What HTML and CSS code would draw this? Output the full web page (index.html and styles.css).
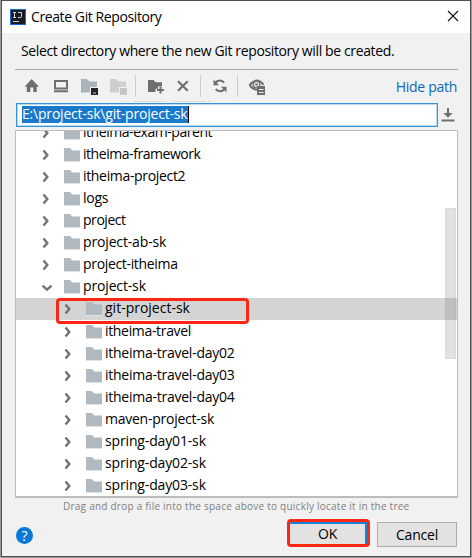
FILE: index.html
```html
<!DOCTYPE html>
<html lang="en">
<head>
<meta charset="utf-8">
<title>Create Git Repository</title>
<link rel="stylesheet" href="styles.css">
</head>
<body>
<svg width="0" height="0" class="defs">
  <symbol id="folder" viewBox="0 0 16 14"><path d="M0 0h6l2.200 2.500H16V13H0z" fill="#afb9bf"/><path d="M0 13h16v1H0z" fill="#dfe3e5"/></symbol>
  <symbol id="right" viewBox="0 0 8 12"><path d="M1.500 1.500 5.300 6 1.500 10.500" fill="none" stroke="#727272" stroke-width="2.400"/></symbol>
  <symbol id="down" viewBox="0 0 12 8"><path d="M1.500 1.600 6 5.600 10.500 1.600" fill="none" stroke="#727272" stroke-width="2.400"/></symbol>
</svg>
<div class="window">
  <header class="titlebar">
    <svg class="logo" width="16" height="16"><rect width="16" height="16" fill="#1769d2"/><rect x="1" y="1" width="14" height="14" fill="#181c23"/><path d="M3 3.500h3M4.500 3.500v5M3 8.500h3M8 3.500h3.500v4q0 1-1 1H8M3 12.500h6" stroke="#d5d5d5" fill="none"/></svg>
    <h1 class="title">Create Git Repository</h1>
    <svg class="close" width="12" height="12"><path d="M1 1 11 11M11 1 1 11" stroke="#111" stroke-width="1.100"/></svg>
  </header>
  <main class="content">
    <p class="subtitle">Select directory where the new Git repository will be created.</p>
    <div class="toolbar">
      <svg class="tools" width="260" height="32" viewBox="15 70 260 32">
        <path d="M24.500 86.800 31.700 79l7.300 7.800h-2.300V92h-3.400v-4.500h-3V92h-3.500v-5.200z" fill="#6e6e6e"/>
        <path d="M55 81h12v7.500H55zM54 91.200h14" fill="none" stroke="#6e6e6e" stroke-width="2"/>
        <path d="M81 79h6l2.300 2.500H97V87h-7v5.500h-9z" fill="#aab5bb"/><path d="M91 88h7v7h-7z" fill="#262222"/><path d="M93 92h3v2h-3z" fill="#777"/>
        <path d="M110 79h6l2.300 2.500h7.700V87h-7v5.500h-9z" fill="#cecece"/><path d="M120 88h7v7h-7z" fill="#c5c5c5"/>
        <path d="M135.500 75v22M200.500 75v22M237.500 75v22" stroke="#cecece"/>
        <path d="M148 80h5.500l2.200 2.200h6.300v4h-4v2.500h-2.500V92H148z" fill="#6e6e6e"/><path d="M160.500 86.500v7M157 90h7" stroke="#6e6e6e" stroke-width="2"/>
        <path d="m178 81.300 9.700 9.400m0-9.400-9.700 9.400" stroke="#6e6e6e" stroke-width="2.100"/>
        <path d="M214.500 84.500a5.500 5.500 0 0 1 9.600-1.800M225.300 87.300a5.500 5.500 0 0 1-9.600 1.900" fill="none" stroke="#6e6e6e" stroke-width="2"/><path d="M213.500 79.500v5.800h5.500zM226.500 92.500v-5.800H221z" fill="#6e6e6e"/>
        <path d="M249.500 85q7.500-8.700 14-.2M249.500 85q3 4.300 7.500 4.800" fill="none" stroke="#6e6e6e" stroke-width="2"/><circle cx="256.500" cy="84.500" r="3.300" fill="none" stroke="#777" stroke-width="1.500"/><circle cx="256.500" cy="84.500" r="1.300" fill="#6e6e6e"/><path d="M257 86h8v9h-8z" fill="#6e6e6e"/><path d="M259 89.500h4.500m-4.500 3h4.500" stroke="#f1f1f1"/>
        <path d="M125 101.500h1M134 101.500h31M173 101.500h38" stroke="#d5d5d5" stroke-dasharray="2 1.500"/>
      </svg>
      <a class="hide">Hide path</a>
    </div>
    <div class="pathrow">
      <div class="field"><span class="selection"><span class="pathtext">E:\project-sk\git-project-sk</span></span></div>
      <svg class="history" width="14" height="14"><path d="M.5 12.500h13" stroke="#6e6e6e" stroke-width="2"/><path d="M7 0v6" stroke="#6e6e6e" stroke-width="2"/><path d="M2.500 5h9L7 9.800z" fill="#6e6e6e"/></svg>
    </div>
    <div class="tree">
      <div class="rows">
        <div class="row"><svg class="arrow"><use href="#right"/></svg><svg class="folder"><use href="#folder"/></svg><span class="tightest">itheima-exam-parent</span></div>
        <div class="row"><svg class="arrow"><use href="#right"/></svg><svg class="folder"><use href="#folder"/></svg><span class="tightest">itheima-framework</span></div>
        <div class="row"><svg class="arrow"><use href="#right"/></svg><svg class="folder"><use href="#folder"/></svg><span class="tighter">itheima-project2</span></div>
        <div class="row"><svg class="arrow"><use href="#right"/></svg><svg class="folder"><use href="#folder"/></svg><span class="tight">logs</span></div>
        <div class="row"><svg class="arrow"><use href="#right"/></svg><svg class="folder"><use href="#folder"/></svg><span class="tightest">project</span></div>
        <div class="row"><svg class="arrow"><use href="#right"/></svg><svg class="folder"><use href="#folder"/></svg><span class="snug">project-ab-sk</span></div>
        <div class="row"><svg class="arrow"><use href="#right"/></svg><svg class="folder"><use href="#folder"/></svg><span class="tighter">project-itheima</span></div>
        <div class="row"><svg class="arrow open"><use href="#down"/></svg><svg class="folder"><use href="#folder"/></svg><span class="snug">project-sk</span></div>
        <div class="row child selected"><svg class="arrow"><use href="#right"/></svg><svg class="folder"><use href="#folder"/></svg><span>git-project-sk</span></div>
        <div class="row child"><svg class="arrow"><use href="#right"/></svg><svg class="folder"><use href="#folder"/></svg><span class="tighter">itheima-travel</span></div>
        <div class="row child"><svg class="arrow"><use href="#right"/></svg><svg class="folder"><use href="#folder"/></svg><span class="tight">itheima-travel-day02</span></div>
        <div class="row child"><svg class="arrow"><use href="#right"/></svg><svg class="folder"><use href="#folder"/></svg><span class="tight">itheima-travel-day03</span></div>
        <div class="row child"><svg class="arrow"><use href="#right"/></svg><svg class="folder"><use href="#folder"/></svg><span class="tight">itheima-travel-day04</span></div>
        <div class="row child"><svg class="arrow"><use href="#right"/></svg><svg class="folder"><use href="#folder"/></svg><span class="tight">maven-project-sk</span></div>
        <div class="row child"><svg class="arrow"><use href="#right"/></svg><svg class="folder"><use href="#folder"/></svg><span class="snug">spring-day01-sk</span></div>
        <div class="row child"><svg class="arrow"><use href="#right"/></svg><svg class="folder"><use href="#folder"/></svg><span class="snug">spring-day02-sk</span></div>
        <div class="row child"><svg class="arrow"><use href="#right"/></svg><svg class="folder"><use href="#folder"/></svg><span class="snug">spring-day03-sk</span></div>
      </div>
      <div class="thumb"></div>
      <div class="mark"></div>
    </div>
    <p class="hint"><span>Drag and drop a file into the space above to quickly locate it in the tree</span></p>
    <footer class="footer">
      <span class="help">?</span>
      <button class="btn ok">OK</button>
      <button class="btn cancel">Cancel</button>
    </footer>
  </main>
</div>
</body>
</html>
```
FILE: styles.css
```css
* { box-sizing: border-box; }
body { margin: 0; width: 472px; height: 558px; overflow: hidden; background: #999; font: 14px/22px "Open Sans", "Noto Sans", sans-serif; color: #000; }
.defs { position: absolute; }
.window { width: 470px; height: 557px; margin-left: 1px; border: 1px solid #515151; background: #f1f1f1; overflow: hidden; }
.titlebar { display: flex; align-items: center; height: 32px; background: #fff; padding: 0 11px 0 8px; }
.logo { margin-top: -1px; }
.title { margin: 0 auto 0 5px; font-size: 14px; font-weight: 400; white-space: nowrap; letter-spacing: -.4px; }
.close { margin-top: -2px; }
.content { padding: 0 12px 0 13px; }
.subtitle { height: 37px; margin: 0; padding: 6px 0 0 6px; border-bottom: 1px solid #a8a8a8; line-height: 24px; white-space: nowrap; letter-spacing: -.37px; }
.toolbar { display: flex; justify-content: space-between; height: 32px; }
.tools { flex: none; }
.hide { color: #0b68bd; line-height: 34px; white-space: nowrap; letter-spacing: -.3px; margin-right: 1px; }
.pathrow { display: flex; height: 28px; padding-top: 1px; }
.field { width: 422px; height: 24px; margin-left: 1px; border: 1px solid #3093df; box-shadow: inset 0 0 0 1px #b8dbf4; background: #fff; padding: 2px 5px; }
.selection { display: block; width: 167px; height: 17px; background: #1979ca; border-right: 1px solid #000; color: #fff; line-height: 16px; }
.pathtext { white-space: nowrap; letter-spacing: -.2px; }
.history { margin: 5px 0 0 3px; }
.tree { position: relative; height: 368px; border: 1px solid #bdbdbd; border-bottom-width: 2px; background: #fff; overflow: hidden; }
.rows { margin-top: -9px; }
.row { display: flex; align-items: center; height: 22px; padding-left: 26px; white-space: nowrap; line-height: 18px; }
.row span { margin-top: -2px; }
.row .snug { letter-spacing: -.15px; }
.row .tight { letter-spacing: -.25px; }
.row .tighter { letter-spacing: -.33px; }
.row .tightest { letter-spacing: -.45px; }
.child { padding-left: 48px; }
.selected { background: #d4d4d4; }
.selected ~ .row { padding-top: 2px; }
.arrow { width: 8px; height: 12px; margin-right: 14px; flex: none; }
.arrow.open { width: 12px; height: 8px; margin: 2px 11px 0 -1px; }
.folder { width: 16px; height: 14px; margin-right: 3px; margin-top: -1px; flex: none; }
.thumb { position: absolute; right: 1px; top: 77px; width: 11px; height: 151px; background: rgba(120,120,120,.22); border: 1px solid rgba(120,120,120,.06); }
.mark { position: absolute; left: 40px; top: 167px; width: 193px; height: 26px; border: 3px solid #fb2614; border-radius: 4px; }
.hint { height: 21px; margin: 0; padding-left: 48px; color: #808080; font-size: 10px; line-height: 16px; white-space: nowrap; letter-spacing: .24px; }
.footer { display: flex; align-items: flex-start; padding-right: 1px; }
.help { width: 17px; height: 17px; margin: 8px auto 0 1px; border-radius: 50%; background: #0878d8; color: #fff; text-align: center; line-height: 17px; }
.btn { height: 25px; margin: 3px 0 0; padding: 0; border: 1px solid #adadad; background: #e2e2e2; font: inherit; line-height: 21px; letter-spacing: -.2px; }
.ok { width: 77px; height: 22px; line-height: 18px; border: 2px solid #1681d7; outline: 3px solid #fb2614; border-left: 0; border-bottom: 0; border-radius: 1px; margin-right: 10px; }
.cancel { width: 80px; }
```
